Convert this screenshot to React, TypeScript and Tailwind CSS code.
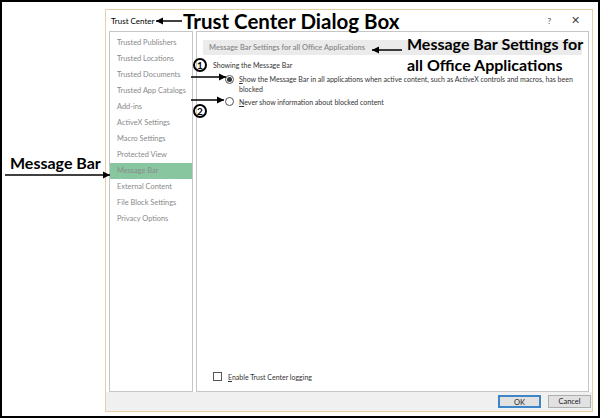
// Trust Center dialog screenshot with tutorial callouts laid over it.

const NAV = [
  'Trusted Publishers',
  'Trusted Locations',
  'Trusted Documents',
  'Trusted App Catalogs',
  'Add-ins',
  'ActiveX Settings',
  'Macro Settings',
  'Protected View',
  'Message Bar',
  'External Content',
  'File Block Settings',
  'Privacy Options',
];

const ui = "font-['Lato',sans-serif]";
const callout = "font-['Lato',sans-serif] font-bold text-black";

function Arrow({ dir, length }: { dir: 'left' | 'right'; length: number }) {
  return (
    <svg width={length} height="8" viewBox={`0 0 ${length} 8`}>
      <line x1="0" y1="4" x2={length} y2="4" stroke="black" strokeWidth="1.5" />
      {dir === 'left' ? (
        <path d="M0 4 L7 0.5 L7 7.5 Z" fill="black" />
      ) : (
        <path d={`M${length} 4 L${length - 7} 0.5 L${length - 7} 7.5 Z`} fill="black" />
      )}
    </svg>
  );
}

function Circled({ n }: { n: string }) {
  return (
    <span
      className={`flex h-[14px] w-[14px] items-center justify-center rounded-full border-2 border-black text-[10px] leading-none ${callout}`}
    >
      {n}
    </span>
  );
}

function Radio({ on }: { on?: boolean }) {
  return (
    <span className="flex h-[9px] w-[9px] shrink-0 items-center justify-center rounded-full border border-[#555] bg-white">
      {on && <span className="h-[5px] w-[5px] rounded-full bg-[#333]" />}
    </span>
  );
}

export default function App() {
  return (
    <div className="relative h-[418px] w-[600px] overflow-hidden border-2 border-black bg-white">
      {/* dialog */}
      <div className={`ml-[103px] mt-[7px] flex h-[403px] w-[488px] flex-col border border-[#e6cfa6] bg-white ${ui}`}>
        <div className="flex h-[21px] items-center pl-[5px] pr-[12px] text-[8px] text-black">
          <span>Trust Center</span>
          <span className="ml-auto text-[8px] text-[#444]">?</span>
          <span className="ml-[20px] text-[11px] font-light text-[#444]">✕</span>
        </div>
        <div className="flex h-[361px] gap-[3px] px-[3px]">
          <div className="w-[84px] border border-[#c6c6c6] pt-[3px]">
            {NAV.map((item) => (
              <div
                key={item}
                className={`flex h-[16px] items-center pl-[7px] text-[7.4px] text-[#8a8a8a] ${
                  item === 'Message Bar' ? 'bg-[#88c6a0] text-[#5d6d63]' : ''
                }`}
              >
                {item}
              </div>
            ))}
          </div>
          <div className="flex flex-1 flex-col border border-[#c6c6c6] px-[6px] pb-[9px] pt-[8px] text-[7px] text-[#333]">
            <div className="flex h-[15px] items-center bg-[#ebebeb] pl-[6px] text-[7.5px] font-semibold text-[#8a8a8a]">
              Message Bar Settings for all Office Applications
            </div>
            <div className="mt-[5px] pl-[10px]">Showing the Message Bar</div>
            <div className="mt-[3px] flex gap-[5px] pl-[22px]">
              <span className="mt-[1px]">
                <Radio on />
              </span>
              <span className="leading-[10px]">
                <u>S</u>how the Message Bar in all applications when active content, such as ActiveX controls and
                macros, has been blocked
              </span>
            </div>
            <div className="mt-[3px] flex items-center gap-[5px] pl-[22px]">
              <Radio />
              <span>
                <u>N</u>ever show information about blocked content
              </span>
            </div>
            <div className="mt-auto flex items-center gap-[6px] pl-[10px]">
              <span className="h-[9px] w-[9px] border border-[#555] bg-white" />
              <span>
                <u>E</u>nable Trust Center logging
              </span>
            </div>
          </div>
        </div>
        <div className="flex flex-1 items-center justify-end gap-[7px] bg-[#f0f0f0] pr-[1px] text-[7.5px] text-[#222]">
          <button className="h-[13px] w-[43px] border-2 border-[#3d85c6] bg-[#e1e1e1]">OK</button>
          <button className="h-[13px] w-[43px] border border-[#adadad] bg-[#e1e1e1]">Cancel</button>
        </div>
      </div>

      {/* callouts */}
      <div className="absolute left-[154px] top-[7px] flex items-center gap-[1px]">
        <Arrow dir="left" length={26} />
        <span className={`text-[20.5px] leading-[24px] ${callout}`}>Trust Center Dialog Box</span>
      </div>
      <div className="absolute left-[370px] top-[44px]">
        <Arrow dir="left" length={30} />
      </div>
      <div className={`absolute left-[405px] top-[31px] text-[16px] leading-[21px] ${callout}`}>
        <div>Message Bar Settings for</div>
        <div>all Office Applications</div>
      </div>
      <div className={`absolute left-[8px] top-[151px] text-[16px] leading-[20px] ${callout}`}>Message Bar</div>
      <div className="absolute left-[3px] top-[169px]">
        <Arrow dir="right" length={105} />
      </div>
      <div className="absolute left-[191px] top-[56px]">
        <Circled n="1" />
      </div>
      <div className="absolute left-[189px] top-[71px]">
        <Arrow dir="right" length={35} />
      </div>
      <div className="absolute left-[189px] top-[94px]">
        <Arrow dir="right" length={33} />
      </div>
      <div className="absolute left-[191px] top-[102px]">
        <Circled n="2" />
      </div>
    </div>
  );
}
